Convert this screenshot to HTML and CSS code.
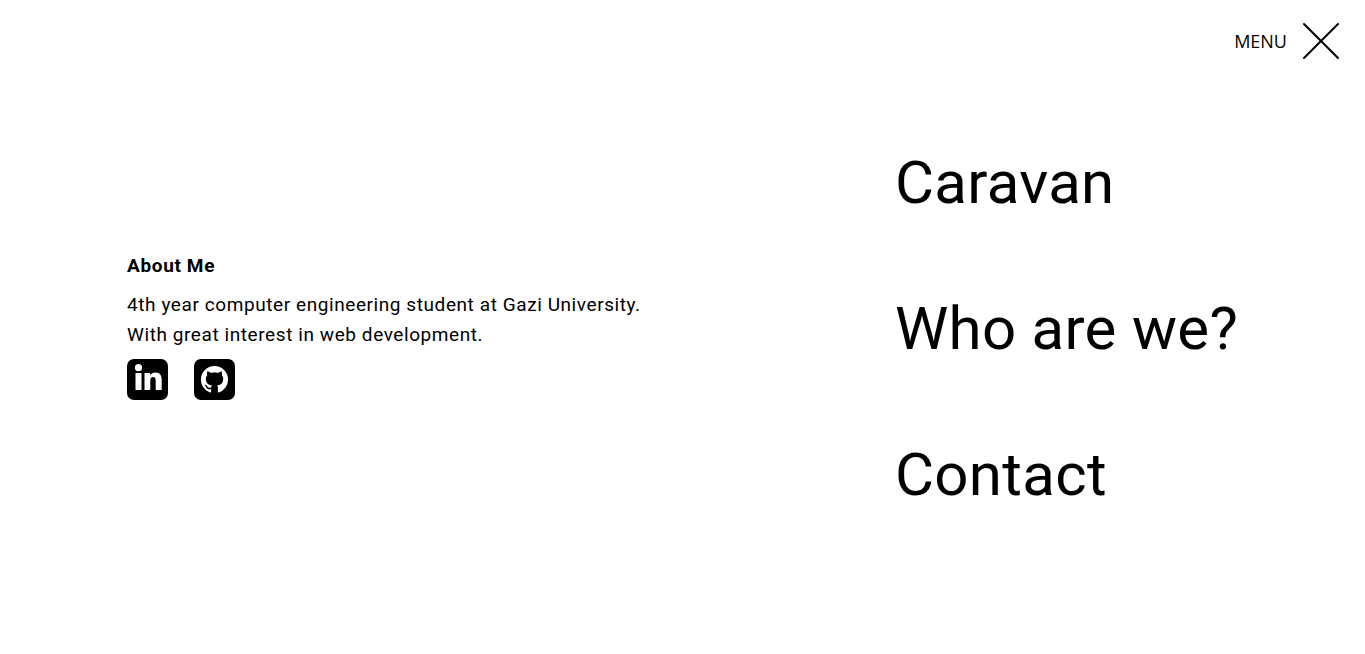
FILE: index.html
```html
<!DOCTYPE html>
<html lang="en">
<head>
    <meta charset="UTF-8">
    <meta name="viewport" content="width=device-width, initial-scale=1.0">
    <link rel="stylesheet" href="styles.css">
    <title>Caravan</title>
</head>

<body>
    <header class="topbar">
        <span class="menu-label">MENU</span>
        <button class="menu-close" aria-label="Close menu">
            <svg width="38" height="38" viewBox="0 0 38 38">
                <path d="M2 2 L36 36 M36 2 L2 36" stroke="#000" stroke-width="2" stroke-linecap="round" fill="none"/>
            </svg>
        </button>
    </header>

    <main class="panel">
        <section class="about">
            <h2>About Me</h2>
            <p>4th year computer engineering student at Gazi University.<br>With great interest in web development.</p>
            <div class="socials">
                <a class="social" href="#" aria-label="LinkedIn">
                    <svg width="41" height="41" viewBox="0 0 41 41">
                        <rect width="41" height="41" rx="7" fill="#000"/>
                        <circle cx="11.500" cy="8.700" r="3.600" fill="#fff"/>
                        <rect x="8.500" y="14" width="6" height="17" fill="#fff"/>
                        <path d="M17.500 14h5.600v2.400c1-1.700 2.900-2.900 5.300-2.900 4.500 0 6.300 2.800 6.300 7.300V31h-6v-9.300c0-2.200-.7-3.600-2.600-3.600-2.100 0-2.800 1.500-2.800 3.600V31h-5.800z" fill="#fff"/>
                    </svg>
                </a>
                <a class="social" href="#" aria-label="GitHub">
                    <svg width="41" height="41" viewBox="0 0 41 41">
                        <rect width="41" height="41" rx="7" fill="#000"/>
                        <g transform="translate(6.900 6.900) scale(1.700)">
                            <path fill="#fff" d="M8 0C3.58 0 0 3.58 0 8c0 3.54 2.29 6.53 5.47 7.59.4.07.55-.17.55-.38 0-.19-.01-.82-.01-1.49-2.01.37-2.53-.49-2.69-.94-.09-.23-.48-.94-.82-1.13-.28-.15-.68-.52-.01-.53.63-.01 1.08.58 1.23.82.72 1.21 1.87.87 2.33.66.07-.52.28-.87.51-1.07-1.78-.2-3.64-.89-3.64-3.95 0-.87.31-1.59.82-2.15-.08-.2-.36-1.02.08-2.12 0 0 .67-.21 2.2.82.64-.18 1.32-.27 2-.27.68 0 1.36.09 2 .27 1.53-1.04 2.2-.82 2.2-.82.44 1.1.16 1.92.08 2.12.51.56.82 1.27.82 2.15 0 3.07-1.87 3.75-3.65 3.95.29.25.54.73.54 1.48 0 1.07-.01 1.93-.01 2.2 0 .21.15.46.55.38A8.013 8.013 0 0016 8c0-4.42-3.58-8-8-8z"/>
                        </g>
                    </svg>
                </a>
            </div>
        </section>

        <nav class="links">
            <a href="#">Caravan</a>
            <a href="#">Who are we?</a>
            <a href="#">Contact</a>
        </nav>
    </main>
</body>
</html>
```

FILE: styles.css
```css
html, body {
    height: 100%;
}
body {
    margin: 0;
    background-color: #fff;
    color: #000;
    font-family: "Roboto", "Liberation Sans", sans-serif;
    overflow: hidden;
}
a {
    color: inherit;
    text-decoration: none;
}
.topbar {
    display: flex;
    justify-content: flex-end;
    align-items: center;
    gap: 15px;
    padding: 22px 25px 0 0;
}
.menu-label {
    font-family: "Open Sans", sans-serif;
    font-size: 18px;
}
.menu-close {
    display: flex;
    padding: 0;
    border: 0;
    background: none;
}
.panel {
    display: flex;
    align-items: center;
    padding: 0 0 0 127px;
    margin-top: 86px;
}
.about {
    width: 768px;
    flex: none;
    padding-bottom: 6px;
}
.about h2 {
    margin: 0 0 9px;
    font-size: 19px;
    line-height: 30px;
    font-weight: 700;
    letter-spacing: 0.65px;
}
.about p {
    margin: 0;
    font-size: 19px;
    line-height: 30px;
    letter-spacing: 0.58px;
}
.socials {
    display: flex;
    gap: 26px;
    margin-top: 9px;
}
.social {
    display: flex;
}
.links {
    display: flex;
    flex-direction: column;
    gap: 73px;
}
.links a {
    font-size: 60px;
    line-height: 73px;
    letter-spacing: 0.3px;
}
```
